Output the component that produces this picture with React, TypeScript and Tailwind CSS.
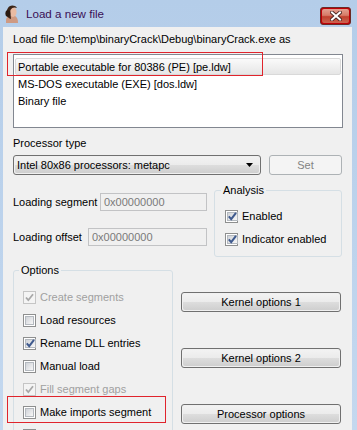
import React from 'react'

const FONT = { fontFamily: '"Liberation Sans", Arial, sans-serif' }

function Check({ checked = false, disabled = false }: { checked?: boolean; disabled?: boolean }) {
  return (
    <span
      className={
        disabled
          ? 'w-[13px] h-[13px] shrink-0 border border-[#c5c5c5] bg-[#f4f4f4] flex items-center justify-center'
          : 'w-[13px] h-[13px] shrink-0 border border-[#8e8f8f] bg-white p-px flex'
      }
    >
      {disabled ? (
        checked && (
          <svg width="11" height="11" viewBox="0 0 11 11">
            <path d="M2 5.5 L4.3 8.2 L9 2.2" stroke="#a8a8a8" strokeWidth="1.8" fill="none" />
          </svg>
        )
      ) : (
        <span className="flex-1 border border-[#b4b9bf] bg-[linear-gradient(135deg,#d0d3d8,#f7f7f7)] flex items-center justify-center">
          {checked && (
            <svg width="9" height="9" viewBox="0 0 9 9" className="overflow-visible">
              <path d="M0.8 4.4 L3.2 7.2 L8 0.8" stroke="#3f5a8e" strokeWidth="2" fill="none" />
            </svg>
          )}
        </span>
      )}
    </span>
  )
}

function CheckRow({ label, checked, disabled }: { label?: string; checked?: boolean; disabled?: boolean }) {
  return (
    <div className="flex items-center gap-[4px] h-[16px] whitespace-nowrap">
      <Check checked={checked} disabled={disabled} />
      {label && <span className={disabled ? 'text-[#a0a0a0]' : 'text-black'}>{label}</span>}
    </div>
  )
}

function Button({ label }: { label: string }) {
  return (
    <div className="h-[20px] rounded-[3px] border border-[#707070] p-px">
      <div className="h-full rounded-[2px] bg-[linear-gradient(to_bottom,#f2f2f2_0%,#ebebeb_50%,#dddddd_51%,#cfcfcf_100%)] flex items-center justify-center text-black">
        {label}
      </div>
    </div>
  )
}

function TitleIcon() {
  return (
    <svg width="14" height="18" viewBox="0 0 14 18">
      <path d="M1 16 C1 12 3 11 5 11 L10 11 C12 12 13 14 13 18 L1 18 Z" fill="#cf9a82" />
      <ellipse cx="8" cy="7" rx="3.6" ry="5" fill="#e9bba3" />
      <path d="M3 3 C4 0 10 -0.5 12 3 C10 2 7 2 5.5 5 C5 8 6 11 6 14 C3 13 1 11 1.5 7 C1.8 5 2.3 4 3 3 Z" fill="#3b2519" />
      <ellipse cx="2.8" cy="8.5" rx="2.4" ry="3.2" fill="#2a1a12" />
    </svg>
  )
}

function CloseButton() {
  return (
    <div className="ml-auto mt-[4px] w-[31px] h-[18px] shrink-0 rounded-[3px] border border-[#6b2b25] bg-red-700 p-px">
      <div className="h-full rounded-[2px] bg-[linear-gradient(to_bottom,#e3a090_0%,#d77b68_45%,#c0412e_55%,#cc6450_100%)] flex items-center justify-center">
        <svg width="12" height="10" viewBox="0 0 12 10">
          <path d="M2 1.5 L10 8.5 M10 1.5 L2 8.5" stroke="#4a2623" strokeWidth="3.8" strokeLinecap="square" />
          <path d="M2 1.5 L10 8.5 M10 1.5 L2 8.5" stroke="#ffffff" strokeWidth="2" strokeLinecap="square" />
        </svg>
      </div>
    </div>
  )
}

export default function App() {
  return (
    <div
      className="w-[357px] h-[430px] overflow-hidden bg-[linear-gradient(to_bottom,#b4cde9,#c4d8ef)] text-[11px] leading-[16px] relative"
      style={FONT}
    >
      {/* title bar */}
      <div className="h-[27px] flex items-center pl-[5px] pr-[6px]">
        <TitleIcon />
        <span className="ml-[7px] text-[11.6px] text-[#3a0f55]">Load a new file</span>
        <CloseButton />
      </div>

      {/* client */}
      <div className="ml-[3px] w-[349px] h-[403px] bg-[#f0f0f0] pl-[10px] pr-[9px] pt-[4px]">
        <div className="h-[16px] whitespace-nowrap">Load file D:\temp\binaryCrack\Debug\binaryCrack.exe as</div>

        <div className="mt-[7px] h-[74px] border border-[#828790] bg-white pt-[3px] px-px">
          <div className="h-[17px] rounded-[2px] border border-[#d9d9d9] bg-[linear-gradient(to_bottom,#fafafa,#e6e6e6)] pl-[2px] flex items-center">
            Portable executable for 80386 (PE) [pe.ldw]
          </div>
          <div className="h-[17px] pl-[3px] flex items-center">MS-DOS executable (EXE) [dos.ldw]</div>
          <div className="h-[17px] pl-[3px] flex items-center">Binary file</div>
        </div>

        <div className="mt-[7px] h-[16px]">Processor type</div>

        <div className="mt-[4px] flex gap-[8px]">
          <div className="w-[248px] h-[20px] rounded-[3px] border border-[#707070] p-px">
            <div className="h-full rounded-[2px] bg-[linear-gradient(to_bottom,#f2f2f2_0%,#ebebeb_50%,#dddddd_51%,#cfcfcf_100%)] flex items-center pl-[2px] pr-[6px]">
              <span>Intel 80x86 processors: metapc</span>
              <svg className="ml-auto" width="7" height="4" viewBox="0 0 7 4">
                <path d="M0 0 L7 0 L3.5 4 Z" fill="#000" />
              </svg>
            </div>
          </div>
          <div className="w-[73px] h-[20px] rounded-[3px] border border-[#adb2b5] bg-[#f4f4f4] flex items-center justify-center text-[#838383]">
            Set
          </div>
        </div>

        <div className="mt-[8px] flex gap-[7px]">
          <div className="w-[194px] pt-[10px] flex flex-col gap-[17px] whitespace-nowrap">
            <div className="flex items-center h-[18px]">
              <span>Loading segment</span>
              <div className="ml-auto w-[107px] h-[18px] border border-[#c2c3c5] bg-[#f0f0f0] text-[#7a7a7a] pl-[3px] flex items-center">
                0x00000000
              </div>
            </div>
            <div className="flex items-center h-[18px]">
              <span>Loading offset</span>
              <div className="ml-auto w-[119px] h-[18px] border border-[#c2c3c5] bg-[#f0f0f0] text-[#7a7a7a] pl-[3px] flex items-center">
                0x00000000
              </div>
            </div>
          </div>
          <fieldset className="w-[128px] border border-[#d5dfe5] rounded-[3px]">
            <legend className="ml-[6px] px-[2px] leading-[15px]">Analysis</legend>
            <div className="pl-[10px] pt-[10px] pb-[9px] flex flex-col gap-[7px]">
              <CheckRow label="Enabled" checked />
              <CheckRow label="Indicator enabled" checked />
            </div>
          </fieldset>
        </div>

        <div className="mt-[6px] flex gap-[8px] items-start">
          <fieldset className="w-[160px] h-[200px] border border-[#d5dfe5] rounded-[3px] shrink-0">
            <legend className="ml-[5px] px-[2px] leading-[15px]">Options</legend>
            <div className="pl-[9px] pt-[11px] flex flex-col gap-[7px]">
              <CheckRow label="Create segments" checked disabled />
              <CheckRow label="Load resources" />
              <CheckRow label="Rename DLL entries" checked />
              <CheckRow label="Manual load" />
              <CheckRow label="Fill segment gaps" checked disabled />
              <CheckRow label="Make imports segment" />
              <CheckRow />
            </div>
          </fieldset>
          <div className="w-[160px] pt-[29px] flex flex-col gap-[36px]">
            <Button label="Kernel options 1" />
            <Button label="Kernel options 2" />
            <Button label="Processor options" />
          </div>
        </div>
      </div>

      {/* red annotation boxes */}
      <div className="absolute left-[7px] top-[52px] w-[256px] h-[24px] border border-[#e0242c]" />
      <div className="absolute left-[7px] top-[396px] w-[159px] h-[27px] border border-[#e0242c]" />
    </div>
  )
}
